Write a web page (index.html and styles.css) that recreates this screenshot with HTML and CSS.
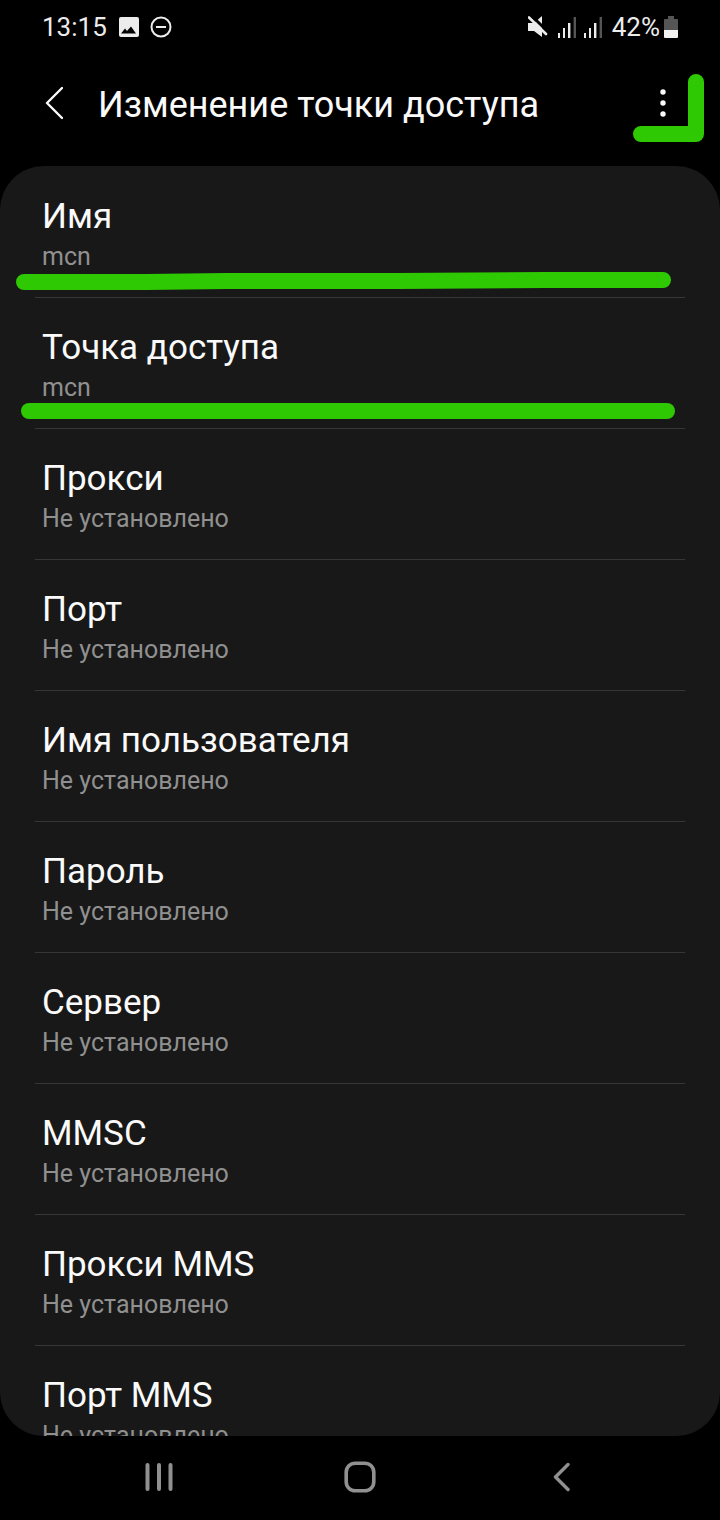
FILE: index.html
```html
<!DOCTYPE html>
<html lang="ru">
<head>
    <meta charset="UTF-8" />
    <meta name="viewport" content="width=device-width, initial-scale=1">
    <title>Изменение точки доступа</title>
    <link rel="stylesheet" href="styles.css">
</head>

<body>
<div class="status-bar">
    <div class="status-group">
        <span class="clock">13:15</span>
        <svg class="icon-image" width="20" height="20" viewBox="0 0 20 20">
            <rect x="0" y="0" width="20" height="20" rx="2" fill="#ececec"/>
            <path d="M2 16.5 L6 11.5 L8 14 L12 9.5 L17 16.5 Z" fill="#000"/>
        </svg>
        <svg class="icon-dnd" width="22" height="22" viewBox="0 0 22 22" fill="none" stroke="#ececec" stroke-width="2">
            <circle cx="11" cy="11" r="9.5"/>
            <path d="M6 11 H16"/>
        </svg>
    </div>
    <div class="status-group">
        <svg class="icon-mute" width="20" height="22" viewBox="0 0 20 22">
            <path d="M0 7 H6 L14 0 V21 L6 15 H0 Z" fill="#ececec"/>
            <path d="M2.5 -1.5 L21 17" stroke="#000" stroke-width="3"/>
            <path d="M1 1.5 L18 18" stroke="#ececec" stroke-width="2.6" stroke-linecap="round"/>
        </svg>
        <svg class="icon-signal" width="18" height="21" viewBox="0 0 18 21">
            <path d="M0 16 H2 V21 H0 Z M5 11 H7 V21 H5 Z M10 6 H12.4 V21 H10 Z" fill="#ececec"/>
            <path d="M15.6 0 H18 V21 H15.6 Z" fill="#555"/>
        </svg>
        <svg class="icon-signal" width="18" height="21" viewBox="0 0 18 21">
            <path d="M0 16 H2 V21 H0 Z M5 11 H7 V21 H5 Z M10 6 H12.4 V21 H10 Z" fill="#ececec"/>
            <path d="M15.6 0 H18 V21 H15.6 Z" fill="#555"/>
        </svg>
        <span class="battery-level">42%</span>
        <svg class="icon-battery" width="14" height="22" viewBox="0 0 14 22">
            <path d="M4 0 H10 V3 H13 Q14 3 14 4 V14 H0 V4 Q0 3 1 3 H4 Z" fill="#555"/>
            <path d="M0 14 H14 V21 Q14 22 13 22 H1 Q0 22 0 21 Z" fill="#f2f2f2"/>
        </svg>
    </div>
</div>

<header class="app-bar">
    <button class="back-button" aria-label="Назад">
        <svg width="18" height="34" viewBox="0 0 18 34" fill="none" stroke="#fafafa" stroke-width="2.4" stroke-linecap="round" stroke-linejoin="round">
            <path d="M17 2 L2 17 L17 32"/>
        </svg>
    </button>
    <h1 class="title">Изменение точки доступа</h1>
    <button class="menu-button" aria-label="Ещё">
        <svg width="6" height="28" viewBox="0 0 6 28" fill="#fafafa">
            <circle cx="3" cy="3" r="2.7"/>
            <circle cx="3" cy="14" r="2.7"/>
            <circle cx="3" cy="25" r="2.7"/>
        </svg>
    </button>
    <svg class="mark mark-corner" width="71" height="68" viewBox="0 0 71 68">
        <path d="M8 60 H63 V8"/>
    </svg>
</header>

<main class="card">
    <ul class="settings">
        <li>
            <button class="setting">
                <span class="label">Имя</span>
                <span class="value">mcn</span>
            </button>
            <svg class="mark mark-name" width="656" height="18" viewBox="0 0 656 18">
                <path d="M8 10 H130 L210 9 H380 L530 8 H647"/>
            </svg>
        </li>
        <li>
            <button class="setting">
                <span class="label">Точка доступа</span>
                <span class="value">mcn</span>
            </button>
            <svg class="mark mark-apn" width="654" height="16" viewBox="0 0 654 16">
                <path d="M8 8 H646"/>
            </svg>
        </li>
        <li>
            <button class="setting">
                <span class="label">Прокси</span>
                <span class="value">Не установлено</span>
            </button>
        </li>
        <li>
            <button class="setting">
                <span class="label">Порт</span>
                <span class="value">Не установлено</span>
            </button>
        </li>
        <li>
            <button class="setting">
                <span class="label">Имя пользователя</span>
                <span class="value">Не установлено</span>
            </button>
        </li>
        <li>
            <button class="setting">
                <span class="label">Пароль</span>
                <span class="value">Не установлено</span>
            </button>
        </li>
        <li>
            <button class="setting">
                <span class="label">Сервер</span>
                <span class="value">Не установлено</span>
            </button>
        </li>
        <li>
            <button class="setting">
                <span class="label">MMSC</span>
                <span class="value">Не установлено</span>
            </button>
        </li>
        <li>
            <button class="setting">
                <span class="label">Прокси MMS</span>
                <span class="value">Не установлено</span>
            </button>
        </li>
        <li>
            <button class="setting">
                <span class="label">Порт MMS</span>
                <span class="value">Не установлено</span>
            </button>
        </li>
    </ul>
</main>

<nav class="nav-bar">
    <button aria-label="Недавние">
        <svg width="28" height="30" viewBox="0 0 28 30" stroke="#909090" stroke-width="4" stroke-linecap="round">
            <path d="M2.5 3 V27 M14 3 V27 M25.5 3 V27"/>
        </svg>
    </button>
    <button aria-label="Главный экран">
        <svg width="32" height="32" viewBox="0 0 32 32" fill="none" stroke="#909090" stroke-width="3.6">
            <rect x="2.2" y="2.2" width="27.6" height="27.6" rx="9"/>
        </svg>
    </button>
    <button aria-label="Назад">
        <svg width="18" height="30" viewBox="0 0 18 30" fill="none" stroke="#909090" stroke-width="3.4" stroke-linecap="round" stroke-linejoin="round">
            <path d="M16 2.5 L3.5 15 L16 27.5"/>
        </svg>
    </button>
</nav>
</body>
</html>
```
FILE: styles.css
```css
* {
    margin: 0;
    padding: 0;
    box-sizing: border-box;
    font-family: Roboto, 'Noto Sans', sans-serif;
}

:root {
    --screen-bg: #000000;
    --card-bg: #181818;
    --divider: #363636;
    --text-color: #fafafa;
    --muted-color: #909090;
    --status-color: #ececec;
    --mark-color: #2fc904;
}

body {
    background-color: var(--screen-bg);
    color: var(--text-color);
    height: 100vh;
    display: flex;
    flex-direction: column;
    overflow: hidden;
}

svg {
    display: block;
    flex: none;
}

button {
    background: none;
    border: none;
    color: inherit;
    cursor: pointer;
}

/* Status bar */
.status-bar {
    display: flex;
    justify-content: space-between;
    height: 54px;
    padding: 0 42px;
    color: var(--status-color);
    font-size: 26px;
    line-height: 30px;
}

.status-group {
    display: flex;
    align-items: center;
}

.icon-image {
    margin-left: 12px;
}

.icon-dnd {
    margin-left: 11px;
}

.icon-signal {
    margin-left: 8px;
}

.icon-mute + .icon-signal {
    margin-left: 10px;
}

.battery-level {
    margin-left: 10px;
}

.icon-battery {
    margin-left: 4px;
}

/* App bar */
.app-bar {
    position: relative;
    display: flex;
    align-items: center;
    height: 112px;
    padding: 0 39px 14px 36px;
}

.back-button,
.menu-button {
    display: flex;
    align-items: center;
    justify-content: center;
    width: 36px;
    height: 48px;
}

.title {
    flex: 1;
    margin-left: 26px;
    padding-top: 4px;
    font-size: 36px;
    font-weight: 400;
    line-height: 44px;
    white-space: nowrap;
}

/* Settings list */
.card {
    flex: 1;
    min-height: 0;
    padding: 0 35px;
    border-radius: 44px;
    background-color: var(--card-bg);
    overflow-x: hidden;
    overflow-y: auto;
    scrollbar-width: none;
}

.settings {
    list-style: none;
}

.settings li {
    position: relative;
    border-top: 1px solid var(--divider);
}

.settings li:first-child {
    border-top-color: transparent;
}

.setting {
    display: block;
    width: 100%;
    padding: 28px 7px 22px;
    text-align: left;
}

.label,
.value {
    display: block;
}

.label {
    font-size: 35px;
    line-height: 44px;
}

.value {
    color: var(--muted-color);
    font-size: 25px;
    line-height: 36px;
}

/* Marker strokes drawn over the screen */
.mark {
    position: absolute;
    fill: none;
    stroke: var(--mark-color);
    stroke-width: 16px;
    stroke-linecap: round;
    stroke-linejoin: round;
    pointer-events: none;
}

.mark-corner {
    top: 20px;
    right: 16px;
}

.mark-name {
    top: 105px;
    left: -19px;
}

.mark-apn {
    top: 105px;
    left: -14px;
}

/* Navigation bar */
.nav-bar {
    display: flex;
    justify-content: space-between;
    align-items: center;
    height: 84px;
    padding: 0 129px 2px;
}

.nav-bar button {
    display: flex;
    align-items: center;
    justify-content: center;
    width: 60px;
    height: 60px;
}
```
